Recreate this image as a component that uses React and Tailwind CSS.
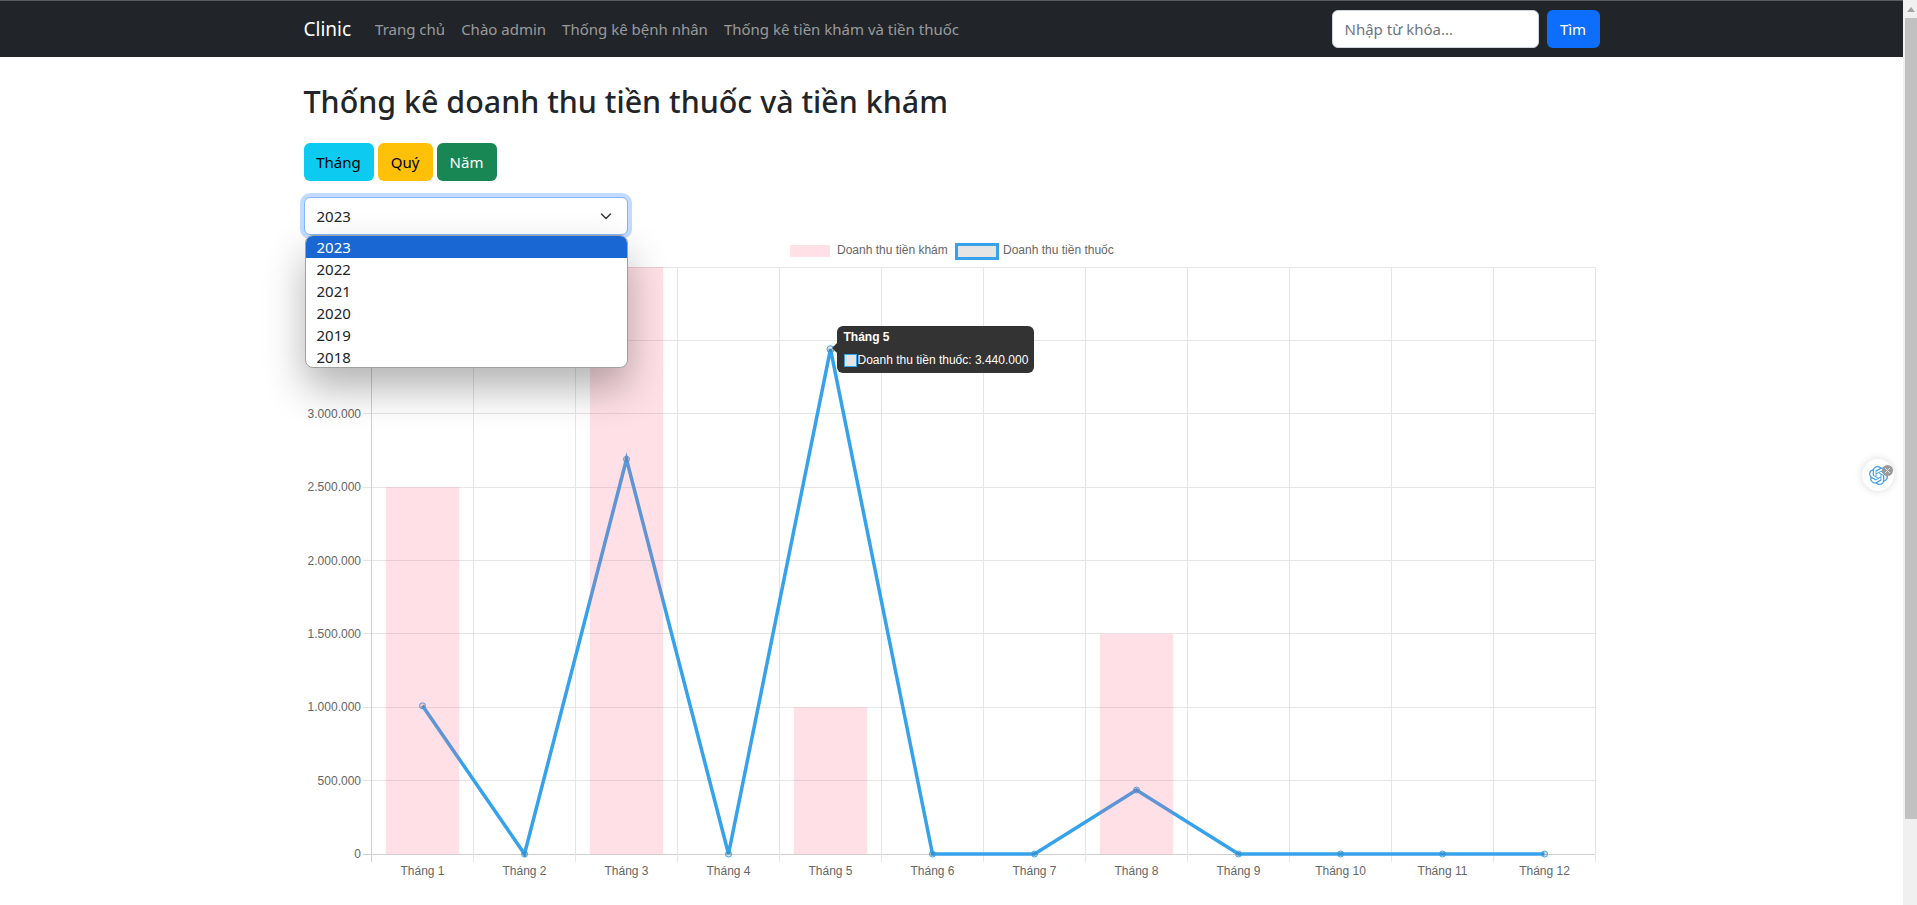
import { SiOpenai } from 'react-icons/si'

const sans = "font-['Noto_Sans',sans-serif]"
const months = Array.from({ length: 12 }, (_, i) => `Tháng ${i + 1}`)
const kham = [2500000, 0, 4000000, 0, 1000000, 0, 0, 1500000, 0, 0, 0, 0]
const thuoc = [1010000, 0, 2690000, 0, 3440000, 0, 0, 436000, 0, 0, 0, 0]
const yTicks = [0, 500000, 1000000, 1500000, 2000000, 2500000, 3000000, 3500000, 4000000]

// chart area inside the canvas
const left = 67.5
const bottom = 619
const bandW = 102
const unit = 146.75 / 1000000
const xAt = (i) => left + bandW * i
const yAt = (v) => bottom - v * unit

function Chart() {
    const points = thuoc.map((v, i) => `${xAt(i + 0.5)},${yAt(v)}`).join(' ')
    return (
        <svg width="1296" height="648" className="block">
            <g fontFamily="Liberation Sans, sans-serif" fontSize="12" fill="#666">
                <rect x="486" y="10" width="40" height="12" fill="#ffe0e6" />
                <text x="533" y="18.5">Doanh thu tiền khám</text>
                <rect x="652.5" y="9.5" width="41" height="14" fill="#e5e5e5" stroke="#36a2eb" strokeWidth="3" />
                <text x="699" y="18.5">Doanh thu tiền thuốc</text>

                {yTicks.map((v) => (
                    <g key={v}>
                        <line x1="59" x2={left + bandW * 12} y1={Math.floor(yAt(v)) + 0.5} y2={Math.floor(yAt(v)) + 0.5} stroke={v === 0 ? '#cfcfcf' : '#e5e5e5'} />
                        <text x="57" y={yAt(v) + 4} textAnchor="end">{v === 0 ? '0' : v.toLocaleString('de-DE')}</text>
                    </g>
                ))}
                {Array.from({ length: 13 }, (_, i) => (
                    <line key={i} x1={Math.floor(xAt(i)) + 0.5} x2={Math.floor(xAt(i)) + 0.5} y1={yAt(4000000)} y2={bottom + 8} stroke={i === 0 ? '#cfcfcf' : '#e5e5e5'} />
                ))}
                {months.map((m, i) => (
                    <text key={m} x={xAt(i + 0.5)} y={bottom + 21} textAnchor="middle">{m}</text>
                ))}
            </g>

            <polyline points={points} fill="none" stroke="#36a2eb" strokeWidth="3.5" strokeLinejoin="miter" />
            {thuoc.map((v, i) => (
                <circle key={i} cx={xAt(i + 0.5)} cy={yAt(v)} r={i === 4 ? 3.5 : 3} fill="rgba(0,0,0,0.1)" stroke="#36a2eb" />
            ))}

            {/* bars are painted over the line, like in the chart */}
            {kham.map((v, i) => v > 0 && (
                <rect key={i} x={xAt(i + 0.5) - 36.7} y={yAt(v)} width="73.4" height={v * unit} fill="rgba(255,99,132,0.2)" />
            ))}
        </svg>
    )
}

function Tooltip() {
    return (
        <div className="absolute left-[533px] top-[91px] w-[197px] h-[47px] rounded-md bg-[#333333] text-white font-['Liberation_Sans',sans-serif] text-xs leading-[14px] pl-[7px] pt-[4px]">
            <div className="absolute left-[-5px] top-[17px] w-0 h-0 border-y-[5px] border-r-[5px] border-y-transparent border-r-[#333333]" />
            <div className="font-bold mb-[9px]">Tháng 5</div>
            <div className="flex items-center whitespace-nowrap">
                <span className="w-[13px] h-[13px] shrink-0 bg-[#e5e5e5] border border-[#36a2eb] mr-px" />
                <span>Doanh thu tiền thuốc: 3.440.000</span>
            </div>
        </div>
    )
}

function YearSelect() {
    const years = [2023, 2022, 2021, 2020, 2019, 2018]
    return (
        <div className="relative w-[324px] z-10">
            <div className="h-[38px] rounded-md border border-[#86b7fe] ring-4 ring-[#c2dbfe] bg-white flex items-center justify-between pl-3 pr-[15px] text-[#212529]">
                <span>2023</span>
                <svg width="12" height="12" viewBox="0 0 12 12" fill="none" stroke="#343a40" strokeWidth="1.5" strokeLinecap="round" strokeLinejoin="round">
                    <path d="M1.5 4l4.5 4.5L10.5 4" />
                </svg>
            </div>
            <div className="absolute left-px top-[38px] w-[323px] h-[133px] overflow-hidden rounded-lg border border-[#a0a0a0] bg-white shadow-[0_20px_40px_rgba(0,0,0,0.3)] text-[#212529]">
                {years.map((y) => (
                    <div key={y} className={`h-[22px] leading-[22px] pl-[11px] ${y === 2023 ? 'bg-[#1967d2] text-white' : ''}`}>{y}</div>
                ))}
            </div>
        </div>
    )
}

export default function App() {
    return (
        <div className={`flex h-screen overflow-hidden bg-white text-[15px] ${sans}`}>
            <div className="relative flex-1 min-w-0">
                <nav className="h-[57px] bg-[#212529] border-t border-[#5a5d60]">
                    <div className="w-[1320px] mx-auto px-3 h-full flex items-center justify-between">
                        <div className="flex items-center">
                            <span className="text-[19px] text-white mr-6">Clinic</span>
                            <div className="flex text-[#ffffff8c] gap-4">
                                <span>Trang chủ</span>
                                <span>Chào admin</span>
                                <span>Thống kê bệnh nhân</span>
                                <span>Thống kê tiền khám và tiền thuốc</span>
                            </div>
                        </div>
                        <div className="flex items-center gap-2">
                            <div className="w-[207px] h-[38px] rounded-md bg-white border border-[#ced4da] px-3 flex items-center text-[#6c757d]">Nhập từ khóa...</div>
                            <button className="w-[53px] h-[38px] rounded-md bg-[#0d6efd] text-white">Tìm</button>
                        </div>
                    </div>
                </nav>

                <main className="w-[1320px] mx-auto px-3">
                    <h1 className="mt-[26px] mb-[22px] text-[30.4px] leading-[38px] font-medium text-[#212529]">Thống kê doanh thu tiền thuốc và tiền khám</h1>
                    <div className="flex gap-1 mb-4">
                        <button className="w-[70px] h-[38px] rounded-md bg-[#0dcaf0] text-black">Tháng</button>
                        <button className="w-[55px] h-[38px] rounded-md bg-[#ffc107] text-black">Quý</button>
                        <button className="w-[60px] h-[38px] rounded-md bg-[#198754] text-white">Năm</button>
                    </div>
                    <YearSelect />
                    <div className="relative">
                        <Chart />
                        <Tooltip />
                    </div>
                </main>

                <div className="absolute left-[1862px] top-[459px] w-8 h-8 rounded-full bg-white shadow-[0_0_8px_rgba(0,0,0,0.15)] flex items-center justify-center">
                    <SiOpenai className="w-[19px] h-[19px] text-[#3f9ee8]" />
                    <span className="absolute right-[1px] top-[6px] w-[11px] h-[11px] rounded-full bg-[#9a9a9a] flex items-center justify-center">
                        <svg width="7" height="7" viewBox="0 0 7 7" stroke="#e5e5e5" strokeWidth="1"><path d="M1 1l5 5M6 1l-5 5" /></svg>
                    </span>
                </div>
            </div>

            <div className="w-[14px] shrink-0 bg-[#f0f0f0] pl-[2px] flex flex-col">
                <div className="h-[18px] flex items-center justify-center">
                    <div className="w-0 h-0 border-x-[4px] border-b-[5px] border-x-transparent border-b-[#a3a3a3]" />
                </div>
                <div className="h-[801px] bg-[#c1c1c1]" />
            </div>
        </div>
    )
}
